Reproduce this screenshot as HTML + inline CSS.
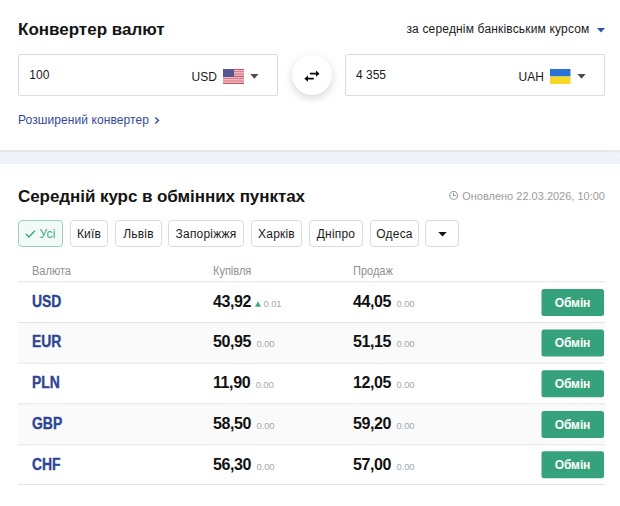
<!DOCTYPE html>
<html><head><meta charset="utf-8">
<style>
*{box-sizing:border-box;margin:0;padding:0}
html,body{width:620px;height:506px;overflow:hidden;background:#fff}
body{font-family:"Liberation Sans",sans-serif;color:#1a1a1a;position:relative}
.abs{position:absolute;white-space:nowrap}
.h{font-weight:bold;font-size:17px;color:#141414;line-height:20px}
.box{position:absolute;border:1px solid #dbdcdd;border-radius:2px;background:#fff;height:42px;top:54px}
.band{position:absolute;left:0;width:620px;top:150px;height:14px;background:#eff2f6;border-top:1px solid #e6e8eb;box-shadow:inset 0 2px 2px -1px rgba(0,0,0,.06)}
.tab{position:absolute;top:220px;height:27px;border:1px solid #dadbdd;border-radius:4px;font-size:12px;line-height:26px;text-align:center;color:#1a1a1a;background:#fff;letter-spacing:0.2px;white-space:nowrap}
.tab.on{border-color:#96d3ba;background:#f2faf7;color:#3fa781}
.th{position:absolute;top:264px;font-size:12px;color:#8e9194;line-height:14px;transform:scaleX(0.917);transform-origin:0 0;white-space:nowrap}
.cur{position:absolute;left:32px;font-weight:bold;font-size:16px;line-height:18px;color:#2b4593;transform:scaleX(0.87);transform-origin:0 0;white-space:nowrap;-webkit-text-stroke:0.35px #2b4593}
.v{position:absolute;font-weight:bold;font-size:16px;line-height:20px;color:#111;letter-spacing:-0.4px;white-space:nowrap}
.v small{font-weight:normal;font-size:9.500px;color:#a3a9af;margin-left:5.500px;letter-spacing:-0.15px}
.btn{position:absolute;left:541px;width:63px;height:27px;color:#fff;font-weight:bold;font-size:12px;line-height:28px;text-align:center;letter-spacing:-0.1px}
</style></head><body>
<div class="abs h" style="left:18px;top:20px">Конвертер валют</div>
<div class="abs" style="right:30.500px;top:22px;font-size:12px;line-height:14px;color:#1a1a1a;letter-spacing:0.17px">за середнім банківським курсом</div>
<svg class="abs" style="left:597px;top:28px" width="8" height="5"><path d="M0 0h8L4 4.500z" fill="#2b55b0"/></svg>

<div class="box" style="left:18px;width:260px"></div>
<div class="abs" style="left:29.300px;top:68px;font-size:12px;line-height:14px">100</div>
<div class="abs" style="left:191.500px;top:70px;font-size:12px;line-height:14px">USD</div>
<svg class="abs" style="left:223px;top:69px" width="21" height="15" viewBox="0 0 21 15" shape-rendering="auto"><rect y="0.000" width="21" height="1.154" fill="#d24f63"/><rect y="1.154" width="21" height="1.154" fill="#ebbcc3"/><rect y="2.308" width="21" height="1.154" fill="#d24f63"/><rect y="3.462" width="21" height="1.154" fill="#ebbcc3"/><rect y="4.615" width="21" height="1.154" fill="#d24f63"/><rect y="5.769" width="21" height="1.154" fill="#ebbcc3"/><rect y="6.923" width="21" height="1.154" fill="#d24f63"/><rect y="8.077" width="21" height="1.154" fill="#ebbcc3"/><rect y="9.231" width="21" height="1.154" fill="#d24f63"/><rect y="10.385" width="21" height="1.154" fill="#ebbcc3"/><rect y="11.538" width="21" height="1.154" fill="#d24f63"/><rect y="12.692" width="21" height="1.154" fill="#ebbcc3"/><rect y="13.846" width="21" height="1.154" fill="#d24f63"/><rect width="11" height="8" fill="#55568f"/></svg>
<svg class="abs" style="left:250px;top:74px" width="9" height="5"><path d="M0.300 0h8.200L4.400 4.700z" fill="#4a4a4a"/></svg>

<div class="abs" style="left:291.500px;top:54.500px;width:40.500px;height:40.500px;border-radius:50%;background:#fff;box-shadow:0 3px 9px rgba(0,0,0,.17)"></div>
<svg class="abs" style="left:300px;top:66px" width="24" height="20" viewBox="300 66 24 20"><path d="M310 73.700H316.500M307.500 78.700H313.800" stroke="#0c0c0c" stroke-width="1.700" fill="none"/><path d="M316 70.600L319.500 73.700 316 76.800zM308 75.600L304.300 78.700 308 81.800z" fill="#0c0c0c"/></svg>

<div class="box" style="left:345px;width:260px"></div>
<div class="abs" style="left:356px;top:68px;font-size:12px;line-height:14px">4 355</div>
<div class="abs" style="left:518.500px;top:70px;font-size:12px;line-height:14px">UAH</div>
<svg class="abs" style="left:550px;top:69px" width="21" height="15"><rect width="20.500" height="7.500" fill="#2a73d6"/><rect y="7.500" width="20.500" height="7.500" fill="#f6d824"/></svg>
<svg class="abs" style="left:577px;top:74px" width="9" height="5"><path d="M0.400 0h8.200L4.500 4.700z" fill="#4a4a4a"/></svg>

<div class="abs" style="left:18px;top:113px;font-size:12px;line-height:14px;color:#34499a;letter-spacing:0.09px">Розширений конвертер</div>
<svg class="abs" style="left:154px;top:116px" width="6" height="9" viewBox="0 0 6 9"><path d="M1.300 1.400l3.200 3-3.200 3" stroke="#34499a" stroke-width="1.400" fill="none"/></svg>

<div class="band"></div>

<div class="abs h" style="left:18px;top:187px;letter-spacing:-0.06px">Середній курс в обмінних пунктах</div>
<div class="abs" style="right:15px;top:189px;font-size:11px;line-height:14px;color:#9b9da0">Оновлено 22.03.2026, 10:00</div>
<svg class="abs" style="left:448px;top:190px" width="12" height="12" viewBox="448 190 12 12"><circle cx="453.600" cy="195.400" r="3.900" stroke="#9a9c9f" stroke-width="1.100" fill="none"/><path d="M453.600 192.800v2.700h2.300" stroke="#9a9c9f" stroke-width="1.100" fill="none"/></svg>

<div class="tab on" style="left:18px;width:45px;padding-left:14px">Усі</div>
<svg class="abs" style="left:24px;top:229px" width="13" height="10" viewBox="24 229 13 10"><path d="M25.800 234l3.100 3 6-6.200" stroke="#3fa781" stroke-width="1.500" fill="none"/></svg>
<div class="tab" style="left:70px;width:38px">Київ</div>
<div class="tab" style="left:115px;width:47px">Львів</div>
<div class="tab" style="left:168px;width:76px">Запоріжжя</div>
<div class="tab" style="left:251px;width:51px">Харків</div>
<div class="tab" style="left:309px;width:54px">Дніпро</div>
<div class="tab" style="left:370px;width:49px">Одеса</div>
<div class="tab" style="left:425px;width:34px"></div>
<svg class="abs" style="left:438px;top:232px" width="9" height="5"><path d="M0.300 0h8.400L4.500 4.500z" fill="#111"/></svg>

<div class="th" style="left:32px">Валюта</div>
<div class="th" style="left:213px">Купівля</div>
<div class="th" style="left:353px">Продаж</div>
<svg class="abs" style="left:0;top:270px" width="620" height="236" viewBox="0 270 620 236">
<rect x="18" y="323.00" width="587" height="39.70" fill="#fafafa"/>
<rect x="18" y="404.30" width="587" height="40.00" fill="#fafafa"/>
<rect x="18" y="281.25" width="587" height="1" fill="#e3e4e6"/>
<rect x="18" y="322.00" width="587" height="1" fill="#e3e4e6"/>
<rect x="18" y="362.70" width="587" height="1" fill="#e3e4e6"/>
<rect x="18" y="403.30" width="587" height="1" fill="#e3e4e6"/>
<rect x="18" y="444.30" width="587" height="1" fill="#e3e4e6"/>
<rect x="18" y="484.00" width="587" height="1" fill="#e3e4e6"/>
<rect x="541.500" y="289.00" width="62.500" height="27" rx="2.500" fill="#36a27b"/>
<rect x="541.500" y="329.40" width="62.500" height="27" rx="2.500" fill="#36a27b"/>
<rect x="541.500" y="370.20" width="62.500" height="27" rx="2.500" fill="#36a27b"/>
<rect x="541.500" y="411.00" width="62.500" height="27" rx="2.500" fill="#36a27b"/>
<rect x="541.500" y="451.20" width="62.500" height="27" rx="2.500" fill="#36a27b"/>
</svg>
<div class="cur" style="top:293px">USD</div>
<div class="v" style="left:213px;top:292px">43,92<small><svg width="6" height="6" viewBox="0 0 6 6" style="margin:0 3px 0 -2px;vertical-align:0.5px"><path d="M0 5.700L3 0.300l3 5.400z" fill="#3ea57c"/></svg>0.01</small></div>
<div class="v" style="left:353px;top:292px">44,05<small>0.00</small></div>
<div class="btn" style="top:289px">Обмін</div>
<div class="cur" style="top:333px">EUR</div>
<div class="v" style="left:213px;top:332px">50,95<small>0.00</small></div>
<div class="v" style="left:353px;top:332px">51,15<small>0.00</small></div>
<div class="btn" style="top:329px">Обмін</div>
<div class="cur" style="top:374px">PLN</div>
<div class="v" style="left:213px;top:373px">11,90<small>0.00</small></div>
<div class="v" style="left:353px;top:373px">12,05<small>0.00</small></div>
<div class="btn" style="top:370px">Обмін</div>
<div class="cur" style="top:415px">GBP</div>
<div class="v" style="left:213px;top:414px">58,50<small>0.00</small></div>
<div class="v" style="left:353px;top:414px">59,20<small>0.00</small></div>
<div class="btn" style="top:411px">Обмін</div>
<div class="cur" style="top:456px">CHF</div>
<div class="v" style="left:213px;top:455px">56,30<small>0.00</small></div>
<div class="v" style="left:353px;top:455px">57,00<small>0.00</small></div>
<div class="btn" style="top:451px">Обмін</div>
</body></html>
